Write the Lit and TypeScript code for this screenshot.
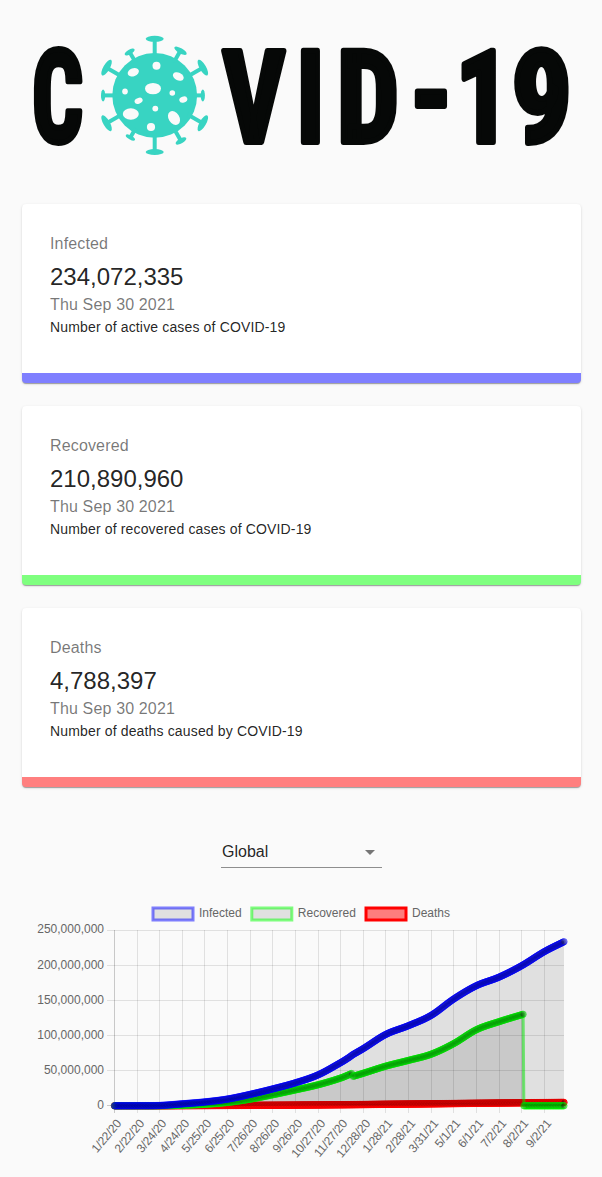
import { LitElement, html, svg, css } from "lit";
import { customElement, property } from "lit/decorators.js";

type Knot = [number, number];

const LAST_DAY = 616;
const MAX = 250;
const PLOT = { left: 114.5, right: 564, top: 38.5, bottom: 213.8 };

const infected: Knot[] = [
  [0, 0], [31, 0.08], [62, 0.42], [93, 2.8], [124, 5.5], [155, 9.6], [186, 16.3], [217, 24.1], [248, 32.8],
  [279, 44.1], [310, 61.6], [322, 69.4], [326, 72.5], [341, 81.6], [372, 101.9], [403, 114.3], [434, 129],
  [465, 152.4], [496, 171.3], [527, 183.5], [558, 199.8], [589, 219.8], [616, 234],
];
const recoveredA: Knot[] = [
  [0, 0], [31, 0.02], [62, 0.1], [93, 0.8], [124, 2.2], [155, 4.9], [186, 9.5], [217, 15.8], [248, 22.7],
  [279, 30], [310, 39.6], [325, 46],
];
const recoveredB: Knot[] = [
  [327, 42], [341, 46.4], [372, 56.6], [403, 64.8], [434, 73.6], [465, 88.8], [496, 108.5], [527, 120], [560, 130.5],
];
const recoveredC: Knot[] = [[561, 0], [616, 0]];
const deaths: Knot[] = [
  [0, 0], [62, 0.02], [93, 0.2], [124, 0.35], [186, 0.66], [248, 1], [310, 1.45], [341, 1.78], [372, 2.2],
  [434, 2.8], [496, 3.6], [558, 4.24], [616, 4.78],
];

const dayX = (d: number) => PLOT.left + ((PLOT.right - PLOT.left) * d) / LAST_DAY;
const valueY = (v: number) => PLOT.bottom - ((PLOT.bottom - PLOT.top) * v) / MAX;

/** Daily values along a cubic Hermite curve through the knots. */
function daily(knots: Knot[]): Knot[] {
  const n = knots.length;
  const slope = (i: number) => {
    const a = knots[Math.max(0, i - 1)];
    const b = knots[Math.min(n - 1, i + 1)];
    return (b[1] - a[1]) / (b[0] - a[0]);
  };
  const out: Knot[] = [knots[0]];
  for (let i = 0; i < n - 1; i++) {
    const [x0, y0] = knots[i];
    const [x1, y1] = knots[i + 1];
    const h = x1 - x0;
    for (let d = x0 + 1; d <= x1; d++) {
      const t = (d - x0) / h;
      const t2 = t * t;
      const t3 = t2 * t;
      out.push([
        d,
        (2 * t3 - 3 * t2 + 1) * y0 + (t3 - 2 * t2 + t) * h * slope(i) +
          (3 * t2 - 2 * t3) * y1 + (t3 - t2) * h * slope(i + 1),
      ]);
    }
  }
  return out;
}

const series = [
  { points: daily(deaths), stroke: "rgb(255,0,0)", fill: "rgba(255,0,0,.5)" },
  {
    points: [...daily(recoveredA), ...daily(recoveredB), ...daily(recoveredC)],
    stroke: "rgba(0,255,0,.5)",
    fill: "rgba(0,0,0,.1)",
  },
  { points: daily(infected), stroke: "rgba(0,0,255,.5)", fill: "rgba(0,0,0,.1)" },
];

const dates = [
  "1/22/20", "2/22/20", "3/24/20", "4/24/20", "5/25/20", "6/25/20", "7/26/20", "8/26/20", "9/26/20", "10/27/20",
  "11/27/20", "12/28/20", "1/28/21", "2/28/21", "3/31/21", "5/1/21", "6/1/21", "7/2/21", "8/2/21", "9/2/21",
];

@customElement("covid-logo")
export class CovidLogo extends LitElement {
  static styles = css`
    :host { display: block; }
    svg { display: block; overflow: visible; }
    .letter {
      font: 700 128px "Roboto Condensed", Roboto, "Liberation Sans", sans-serif;
      text-anchor: middle;
      fill: #060807;
      stroke: #060807;
      stroke-width: 6px;
      stroke-linejoin: round;
    }
    .virus { fill: #38d4c2; }
    .spike { stroke: #38d4c2; stroke-width: 4; }
    .hole { fill: #fafafa; }
  `;

  private spikes: [number, number, number, number][] = [
    [0, 57, 9, 3], [60, 56, 9, 3.2], [120, 56, 9, 3.2], [180, 57, 9, 3], [240, 56, 9, 3.2], [300, 56, 9, 3.2],
    [30, 52, 7, 2.6], [90, 48.5, 6, 2.1], [150, 53, 6, 2.5], [210, 49, 5.2, 2], [270, 52, 6, 2.1], [330, 50.5, 5.6, 2.3],
  ];

  private holes: [number, number, number, number, number][] = [
    [156.5, 65.7, 4, 4, 0], [133.3, 72.3, 5.8, 4, -20], [178.3, 76.5, 5.7, 3.8, 25], [153, 88.6, 8, 5.7, 0],
    [125, 91.6, 2.8, 3, 0], [172.3, 93, 2.8, 2.8, 0], [138.6, 100.8, 4.2, 2.8, -22], [183.3, 99.6, 4.1, 3, -18],
    [155.3, 108.6, 2.9, 2.9, 0], [130.8, 114, 8, 5.7, 0], [174, 118, 5.4, 7.5, -32], [151, 127, 4.1, 4, 0],
  ];

  render() {
    const letter = (c: string, x: number, y: number, sx: number) =>
      svg`<text class="letter" transform="translate(${x} ${y}) scale(${sx} 1)">${c}</text>`;
    return html`<svg width="602" height="180" viewBox="0 0 602 180" role="img" aria-label="COVID-19">
      ${letter("C", 57.6, 142.3, 0.7)}
      <g transform="translate(154.7 95.4)">
        <circle class="virus" r="42.4"></circle>
        ${this.spikes.map(
          ([a, r, w, h]) => svg`<g transform="rotate(${a})">
            <line class="spike" x1="0" y1="-38" x2="0" y2=${-r}></line>
            <ellipse class="virus" cx="0" cy=${-r + 0.4} rx=${w} ry=${h}></ellipse>
          </g>`,
        )}
      </g>
      ${this.holes.map(
        ([x, y, rx, ry, a]) =>
          svg`<ellipse class="hole" rx=${rx} ry=${ry} transform="translate(${x} ${y}) rotate(${a})"></ellipse>`,
      )}
      ${letter("V", 253.8, 142.3, 0.845)} ${letter("I", 310.5, 142.3, 0.79)} ${letter("D", 368.2, 142.3, 0.86)}
      ${letter("-", 431.3, 138.3, 0.885)} ${letter("1", 482.8, 142.3, 0.84)} ${letter("9", 541.8, 142.3, 0.93)}
    </svg>`;
  }
}

@customElement("stat-card")
export class StatCard extends LitElement {
  @property() label = "";
  @property() value = "";
  @property() note = "";
  @property() tone = "infected";

  static styles = css`
    :host { display: block; }
    .card {
      box-sizing: border-box;
      height: 179px;
      padding: 28px;
      background: #fff;
      border-bottom: 10px solid;
      border-radius: 4px;
      box-shadow: 0 2px 1px -1px rgba(0, 0, 0, .2), 0 1px 1px rgba(0, 0, 0, .14), 0 1px 3px rgba(0, 0, 0, .12);
    }
    .infected { border-bottom-color: rgba(0, 0, 255, .5); }
    .recovered { border-bottom-color: rgba(0, 255, 0, .5); }
    .deaths { border-bottom-color: rgba(255, 0, 0, .5); }
    .label, .date { font-size: 16px; line-height: 24px; letter-spacing: .15px; color: rgba(0, 0, 0, .54); }
    .label { margin-bottom: 5px; }
    .value { font-size: 24px; line-height: 32px; color: rgba(0, 0, 0, .87); }
    .note { font-size: 14px; line-height: 20px; letter-spacing: .15px; color: rgba(0, 0, 0, .87); }
  `;

  render() {
    return html`<div class="card ${this.tone}">
      <div class="label">${this.label}</div>
      <div class="value">${this.value}</div>
      <div class="date">Thu Sep 30 2021</div>
      <div class="note">${this.note}</div>
    </div>`;
  }
}

@customElement("cases-chart")
export class CasesChart extends LitElement {
  static styles = css`
    :host { display: block; }
    svg { display: block; }
    text { font: 12px "Liberation Sans", Arial, sans-serif; fill: #666; }
    .grid { stroke: rgba(0, 0, 0, .1); }
    .axis { stroke: rgba(0, 0, 0, .2); }
    .end { text-anchor: end; }
    .date { letter-spacing: -.2px; }
    .line { fill: none; stroke-width: 3; stroke-linejoin: round; }
    .dot { fill: rgba(0, 0, 0, .1); stroke-width: 1; }
    .swatch { stroke-width: 3; }
  `;

  render() {
    const legend: [string, number, string, string][] = [
      ["Infected", 153, "rgba(0,0,255,.5)", "rgba(0,0,0,.1)"],
      ["Recovered", 251.8, "rgba(0,255,0,.5)", "rgba(0,0,0,.1)"],
      ["Deaths", 366, "rgb(255,0,0)", "rgba(255,0,0,.5)"],
    ];
    return html`<svg width="602" height="285" viewBox="0 0 602 285">
      ${legend.map(
        ([name, x, stroke, fill]) => svg`
          <rect x=${x} y="16" width="40" height="12" fill=${fill}></rect>
          <rect class="swatch" x=${x} y="16" width="40" height="12" fill="none" stroke=${stroke}></rect>
          <text x=${x + 46} y="25">${name}</text>`,
      )}
      ${[250, 200, 150, 100, 50, 0].map((v) => {
        const y = Math.floor(valueY(v)) + 0.5;
        return svg`<line class=${v ? "grid" : "axis"} x1="107" x2="564" y1=${y} y2=${y}></line>
          <text class="end" x="104" y=${v === 250 ? y + 2.5 : y + 3.5}>${(v * 1e6).toLocaleString("en-US")}</text>`;
      })}
      ${dates.map((label, i) => {
        const x = Math.floor(dayX(i * 31)) + 0.5;
        return svg`<line class=${i ? "grid" : "axis"} x1=${x} x2=${x} y1="38" y2="221"></line>
          <text class="end date" transform="translate(${x + 4.3} 229.3) rotate(-50)" y="4">${label}</text>`;
      })}
      ${series.map(({ points, stroke, fill }) => {
        const xy = points.map(([d, v]) => [dayX(d).toFixed(2), valueY(v).toFixed(2)]);
        const path = "M" + xy.map((p) => p.join(",")).join("L");
        return svg`<path d="${path}V${PLOT.bottom}H${PLOT.left}Z" fill=${fill}></path>
          <path class="line" d=${path} stroke=${stroke}></path>
          ${xy.map(([x, y]) => svg`<circle class="dot" cx=${x} cy=${y} r="3.2" stroke=${stroke}></circle>`)}`;
      })}
    </svg>`;
  }
}

@customElement("app-root")
export class AppRoot extends LitElement {
  static styles = css`
    :host {
      display: block;
      height: 1177px;
      background: #fafafa;
      font-family: "Liberation Sans", Arial, sans-serif;
    }
    .page { display: flex; flex-direction: column; }
    .cards { display: grid; gap: 23px; margin: 24px 21px 0 22px; }
    .select {
      display: flex;
      align-items: center;
      justify-content: space-between;
      box-sizing: border-box;
      width: 161px;
      height: 32px;
      margin: 49px 0 24px 221px;
      padding: 1px 7px 0 1px;
      border-bottom: 1px solid #8e8e8e;
      font-size: 16px;
      color: rgba(0, 0, 0, .87);
    }
    .arrow { display: block; }
  `;

  render() {
    return html`<main class="page">
      <covid-logo></covid-logo>
      <section class="cards">
        <stat-card tone="infected" label="Infected" value="234,072,335" note="Number of active cases of COVID-19"></stat-card>
        <stat-card tone="recovered" label="Recovered" value="210,890,960" note="Number of recovered cases of COVID-19"></stat-card>
        <stat-card tone="deaths" label="Deaths" value="4,788,397" note="Number of deaths caused by COVID-19"></stat-card>
      </section>
      <div class="select">
        <span>Global</span>
        <svg class="arrow" width="10" height="5" viewBox="0 0 10 5"><path d="M0 0h10L5 5z" fill="#757575"></path></svg>
      </div>
      <cases-chart></cases-chart>
    </main>`;
  }
}
